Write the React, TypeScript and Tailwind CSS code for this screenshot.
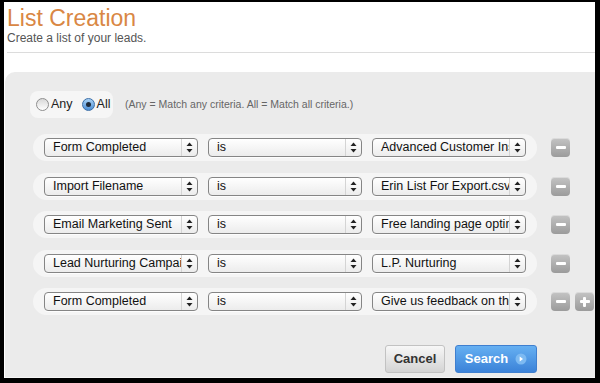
import React from "react";

const font = { fontFamily: '"Liberation Sans", Arial, Helvetica, sans-serif' };

const rows = [
  { field: "Form Completed", value: "Advanced Customer Insights Survey" },
  { field: "Import Filename", value: "Erin List For Export.csv" },
  { field: "Email Marketing Sent", value: "Free landing page optimization" },
  { field: "Lead Nurturing Campaign", value: "L.P. Nurturing" },
  { field: "Form Completed", value: "Give us feedback on the new site" },
];

function Arrows() {
  return (
    <svg width="7" height="11" viewBox="0 0 7 11">
      <path d="M3.5 0.5 L6.5 4 L0.5 4 Z" fill="#222" />
      <path d="M3.5 10.5 L6.5 7 L0.5 7 Z" fill="#222" />
    </svg>
  );
}

function Select({ text }: { text: string }) {
  return (
    <div className="flex h-[19px] w-[154px] items-stretch overflow-hidden rounded-[4px] border border-[#858585] bg-gradient-to-b from-white to-[#ececec] shadow-[0_1px_0_rgba(255,255,255,0.8)]">
      <div className="flex-1 overflow-hidden whitespace-nowrap pl-[8px] text-[12.5px] leading-[17px] text-[#111]">
        {text}
      </div>
      <div className="flex w-[16px] items-center justify-center border-l border-[#d4d4d4]">
        <Arrows />
      </div>
    </div>
  );
}

function IconButton({ plus }: { plus?: boolean }) {
  return (
    <div className="relative flex h-[19px] w-[19px] items-center justify-center rounded-[4px] bg-gradient-to-b from-[#c4c4c4] to-[#9b9b9b] shadow-[inset_0_1px_0_rgba(255,255,255,0.4)]">
      <div className="h-[3px] w-[10px] rounded-[1px] bg-white" />
      {plus && <div className="absolute h-[10px] w-[3px] rounded-[1px] bg-white" />}
    </div>
  );
}

function Radio({ checked }: { checked?: boolean }) {
  if (checked) {
    return (
      <div className="flex h-[13px] w-[13px] items-center justify-center rounded-full border border-[#3a6ea8] bg-gradient-to-b from-[#a9d2f5] to-[#4c8fd6]">
        <div className="h-[5px] w-[5px] rounded-full bg-[#1e2a3a]" />
      </div>
    );
  }
  return (
    <div className="h-[13px] w-[13px] rounded-full border border-[#8e8e8e] bg-gradient-to-b from-[#d8d8d8] to-white" />
  );
}

export default function App() {
  return (
    <div className="flex h-[383px] w-[600px] bg-black pb-[5px] pl-[4px] pr-[5px] pt-[2px]" style={font}>
      <div className="flex flex-1 flex-col bg-white">
        <div className="mt-[5px] pl-[3px] text-[23px] leading-[23px] text-[#d98744]">List Creation</div>
        <div className="mt-[2px] pl-[3px] text-[12px] leading-[13px] text-[#555]">Create a list of your leads.</div>
        <div className="ml-[3px] mt-[7px] border-t border-[#dcdcdc]" />
        <div className="ml-[1px] mt-[19px] flex flex-1 flex-col rounded-tl-[10px] border-b border-[#f6f6f6] bg-[#ebebeb] pl-[25px] pt-[19px]">
          <div className="flex items-center">
            <div className="flex h-[27px] w-[83px] items-center rounded-[8px] bg-[#f6f6f6] pl-[6px] text-[12.5px] text-[#222]">
              <Radio />
              <span className="ml-[2px]">Any</span>
              <span className="ml-[9px]" />
              <Radio checked />
              <span className="ml-[2px]">All</span>
            </div>
            <div className="ml-[12px] text-[10.5px] text-[#666]">
              (Any = Match any criteria. All = Match all criteria.)
            </div>
          </div>
          <div className="ml-[3px] mt-[16px] flex flex-col gap-[11.5px]">
            {rows.map((r, i) => (
              <div key={i} className="flex items-center">
                <div className="flex h-[27px] w-[504px] items-center gap-[10px] rounded-full bg-[#f5f5f5] pl-[11px]">
                  <Select text={r.field} />
                  <Select text="is" />
                  <Select text={r.value} />
                </div>
                <div className="ml-[14px] flex gap-[5px]">
                  <IconButton />
                  {i === rows.length - 1 && <IconButton plus />}
                </div>
              </div>
            ))}
          </div>
          <div className="ml-[3px] mt-[30px] flex w-[504px] justify-end gap-[10px]">
            <div className="flex h-[28px] w-[60px] items-center justify-center rounded-[3px] border border-[#c2c2c2] bg-gradient-to-b from-[#f7f7f7] to-[#d4d4d4] text-[13px] font-bold text-[#333]">
              Cancel
            </div>
            <div className="flex h-[28px] w-[82px] items-center justify-center gap-[7px] rounded-[3px] border border-[#3f7fcf] bg-gradient-to-b from-[#66b0f2] to-[#3b82d8] text-[13px] font-bold text-white">
              Search
              <svg width="12" height="12" viewBox="0 0 12 12">
                <circle cx="6" cy="6" r="5.5" fill="#7dbaf2" />
                <path d="M4.7 3.6 L8 6 L4.7 8.4 Z" fill="#ffffff" />
              </svg>
            </div>
          </div>
        </div>
      </div>
    </div>
  );
}
